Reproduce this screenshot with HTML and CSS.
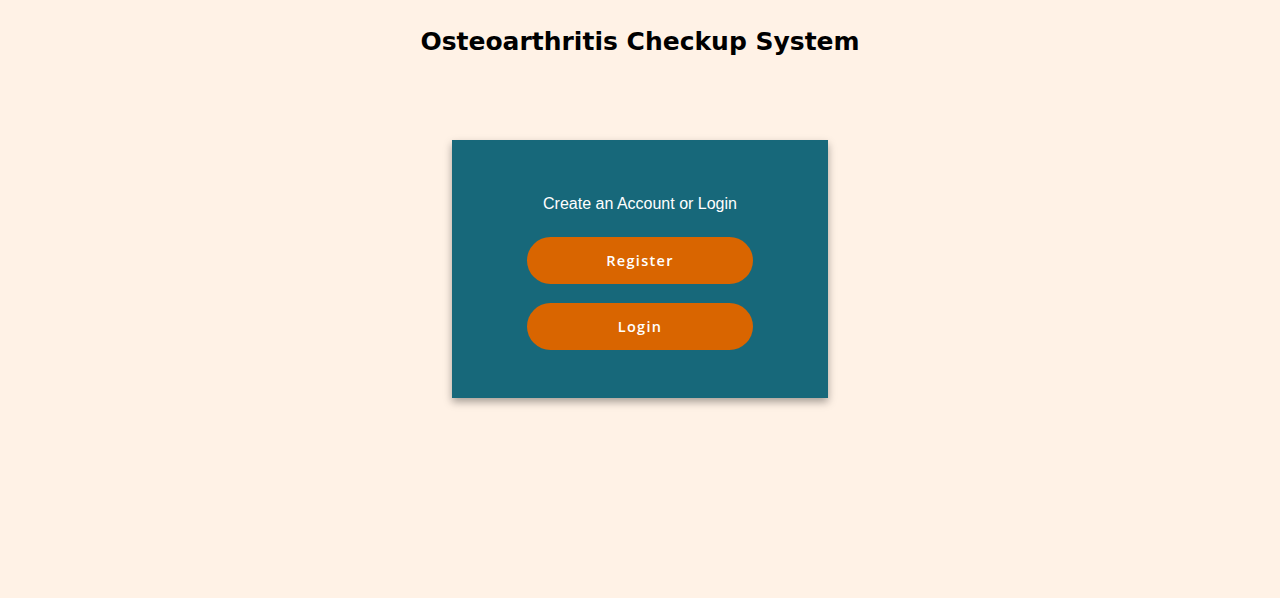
FILE: index.html
```html
<!DOCTYPE html>
<html>
<head>
<meta charset="utf-8">
<link rel="stylesheet" href="styles.css">
</head>
<body>
<h1 class="title">Osteoarthritis Checkup System</h1>
<main class="card">
  <p class="prompt">Create an Account or Login</p>
  <button class="btn">Register</button>
  <button class="btn">Login</button>
</main>
</body>
</html>
```
FILE: styles.css
```css
html, body {
  margin: 0;
  padding: 0;
  background: #fff2e6;
  height: 100%;
}
body {
  display: flex;
  flex-direction: column;
  align-items: center;
}
.title {
  margin: 25px 0 0;
  font-family: "DejaVu Sans", Verdana, sans-serif;
  font-weight: bold;
  font-size: 25px;
  line-height: 34px;
  color: #000;
}
.card {
  margin-top: 81px;
  width: 376px;
  height: 258px;
  box-sizing: border-box;
  background: #17687a;
  box-shadow: 0 4px 8px rgba(0,0,0,0.35);
  display: flex;
  flex-direction: column;
  align-items: center;
  padding-top: 54px;
}
.prompt {
  margin: 0 0 23px;
  font-family: "Liberation Sans", Arial, sans-serif;
  font-size: 16px;
  line-height: 20px;
  color: #fff;
}
.btn {
  width: 226px;
  height: 47px;
  border: none;
  border-radius: 24px;
  background: #d96500;
  color: #fff;
  font-family: "Open Sans", sans-serif;
  font-weight: 600;
  font-size: 14.5px;
  letter-spacing: 1.3px;
  margin-bottom: 19px;
  cursor: pointer;
}
```
